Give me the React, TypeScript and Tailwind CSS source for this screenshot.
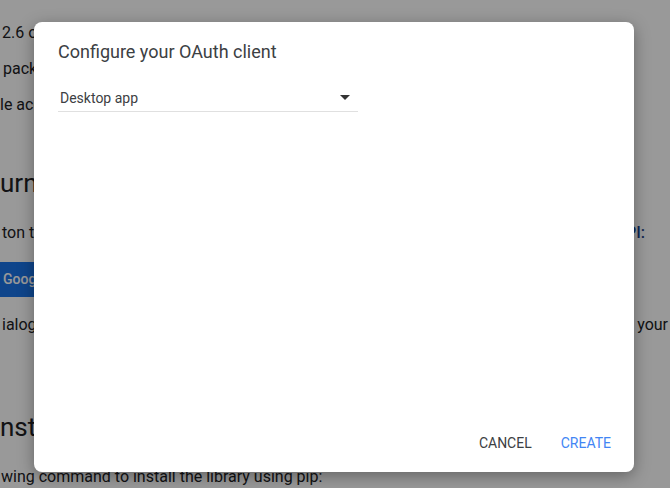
export default function App() {
  return (
    <div className="relative w-[670px] h-[488px] overflow-hidden bg-white font-['Roboto',sans-serif] text-[#202124]">
      {/* page behind the dialog */}
      <div className="flex flex-col pt-[15px] text-[16px]">
        <div className="h-[36px] leading-[36px] pl-[2px]">2.6 or</div>
        <div className="h-[36px] leading-[36px] pl-[3px]">pack</div>
        <div className="h-[36px] leading-[36px]">le acc</div>
        <div className="mt-[40px] h-[40px] leading-[40px] text-[26px]">urn o</div>
        <div className="mt-[12px] h-[36px] leading-[36px] pl-[2px] pr-[25px] flex justify-between">
          <span>ton to</span>
          <span className="font-medium text-[#1a3f8a]">API:</span>
        </div>
        <div className="mt-[11px] h-[35px] flex">
          <div className="w-[80px] bg-[#1a73e8] text-white text-[14px] font-medium leading-[35px] pl-[3px]">Goog</div>
        </div>
        <div className="mt-[10px] h-[36px] leading-[36px] pl-[2px] flex justify-between">
          <span>ialog</span>
          <span className="mr-[2px]">your</span>
        </div>
        <div className="mt-[64px] h-[40px] leading-[40px] text-[26px]">nstal</div>
        <div className="mt-[12px] h-[36px] leading-[36px] pl-[1px]">wing command to install the library using pip:</div>
      </div>

      <div className="absolute inset-0 bg-black/40" />

      {/* dialog */}
      <div className="absolute left-[34px] top-[22px] w-[600px] h-[450px] bg-white rounded-lg shadow-[0_4px_16px_rgba(0,0,0,0.35)] flex flex-col">
        <div className="px-6 pt-[18px]">
          <h2 className="text-[18px] leading-6 text-[#3c4043]">Configure your OAuth client</h2>
          <div className="mt-[24px] w-[300px] flex items-center justify-between border-b border-[#e0e0e0] pb-[3px] pl-[2px] pr-[8px]">
            <span className="text-[14px] leading-5 text-[#3c4043]">Desktop app</span>
            <svg width="10" height="5" viewBox="0 0 10 5" className="mb-[1px]">
              <path d="M0 0h10L5 5z" fill="#333" />
            </svg>
          </div>
        </div>
        <div className="mt-auto flex justify-end gap-[13px] pr-[15px] pb-[19px]">
          <button className="px-2 h-[20px] text-[14px] leading-5 text-[#3c4043]">CANCEL</button>
          <button className="px-2 h-[20px] text-[14px] leading-5 text-[#4285f4]">CREATE</button>
        </div>
      </div>
    </div>
  );
}
